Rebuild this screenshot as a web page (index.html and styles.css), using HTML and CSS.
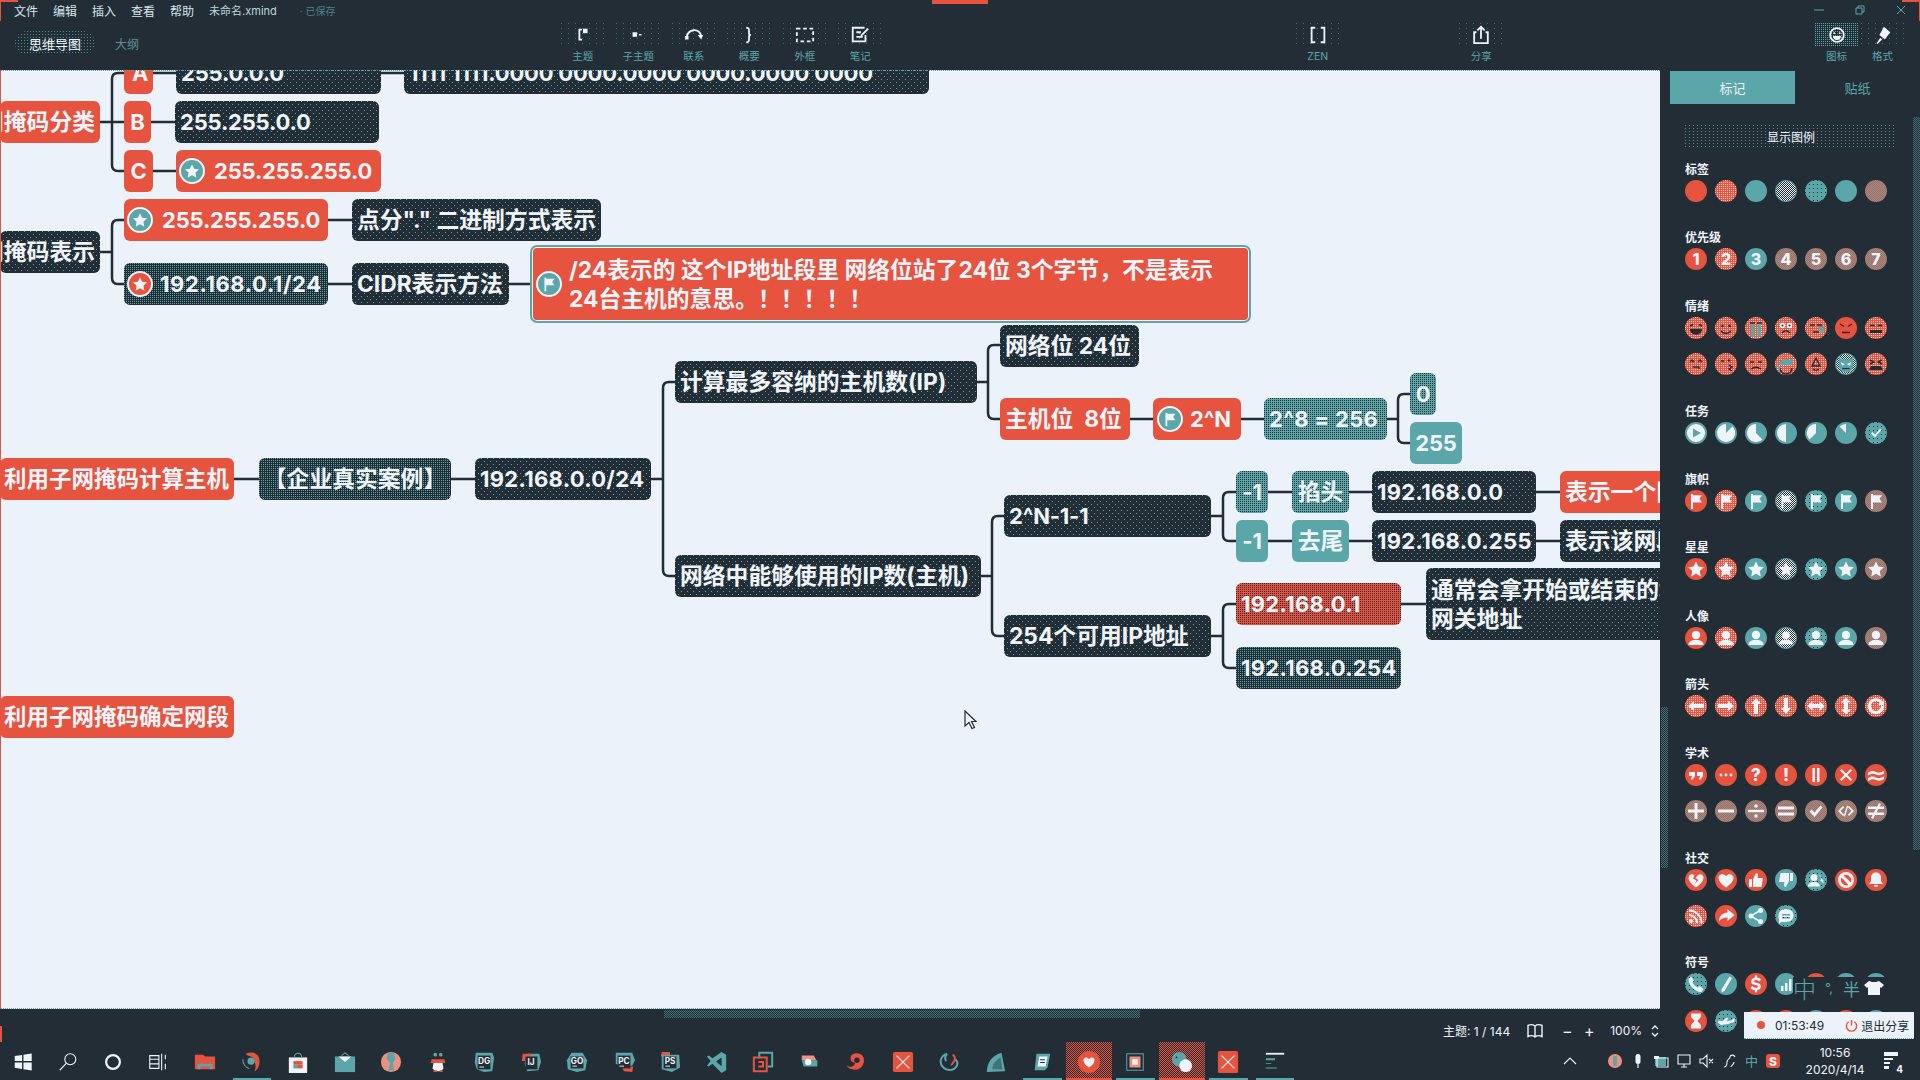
FILE: index.html
```html
<!DOCTYPE html>
<html lang="zh-CN">
<head>
<meta charset="utf-8">
<title>未命名.xmind</title>
<link rel="stylesheet" href="styles.css">
</head>
<body>
<svg class="defs" aria-hidden="true">
  <symbol id="star" viewBox="0 0 22 22"><path d="M11 3.500l2.400 5 5.400.7-4 3.800 1 5.400-4.800-2.700-4.800 2.700 1-5.400-4-3.800 5.400-.7z"/></symbol>
  <symbol id="flag" viewBox="0 0 22 22"><path d="M6 4h2v1.200h9l-2.500 3.600 2.500 3.600H8V19H6z"/></symbol>
  <symbol id="user" viewBox="0 0 22 22"><circle cx="11" cy="8" r="4.200"/><path d="M3.500 18c0-3.500 3-4.500 5-5h5c2 .5 5 1.500 5 5z"/></symbol>
  <symbol id="al" viewBox="0 0 22 22"><path d="M3 11l6-5v3h10v4H9v3z"/></symbol>
  <symbol id="ar" viewBox="0 0 22 22"><path d="M19 11l-6-5v3H3v4h10v3z"/></symbol>
  <symbol id="au" viewBox="0 0 22 22"><path d="M11 3l5 6h-3v10H9V9H6z"/></symbol>
  <symbol id="ad" viewBox="0 0 22 22"><path d="M11 19l5-6h-3V3H9v10H6z"/></symbol>
  <symbol id="ah" viewBox="0 0 22 22"><path d="M2.500 11l5-5v3h7V6l5 5-5 5v-3h-7v3z"/></symbol>
  <symbol id="av" viewBox="0 0 22 22"><path d="M11 2.500l5 5h-3v7h3l-5 5-5-5h3v-7H6z"/></symbol>
  <symbol id="ac" viewBox="0 0 22 22"><path d="M17.500 6.500A8 8 0 1 0 19 11h-3a5 5 0 1 1-1-3l-2 2h6V4z"/></symbol>
  <symbol id="quote" viewBox="0 0 22 22"><path d="M4 8h6v4l-3 4-1-1 1-3H4zM12 8h6v4l-3 4-1-1 1-3h-3z"/></symbol>
  <symbol id="more" viewBox="0 0 22 22"><circle cx="6" cy="11" r="1.400"/><circle cx="11" cy="11" r="1.400"/><circle cx="16" cy="11" r="1.400"/></symbol>
  <symbol id="pause" viewBox="0 0 22 22"><path d="M7.500 4h2.500v14H7.500zM12 4h2.500v14H12z"/></symbol>
  <symbol id="times" viewBox="0 0 22 22"><path d="M6.500 5l4.500 4.500L15.500 5 17 6.500 12.500 11l4.500 4.500-1.500 1.500-4.500-4.500L6.500 17 5 15.500 9.500 11 5 6.500z"/></symbol>
  <symbol id="approx" viewBox="0 0 22 22"><path d="M3 9c3-3 6-2 8-1s4 1 8-1v2.500c-3 2-6 2-8 1s-4-1.500-8 1zM3 14.500c3-3 6-2 8-1s4 1 8-1V15c-3 2-6 2-8 1s-4-1.500-8 1z"/></symbol>
  <symbol id="plus" viewBox="0 0 22 22"><path d="M9.500 3h3v6.500H19v3h-6.500V19h-3v-6.500H3v-3h6.500z"/></symbol>
  <symbol id="minus" viewBox="0 0 22 22"><path d="M3 9.500h16v3H3z"/></symbol>
  <symbol id="div" viewBox="0 0 22 22"><path d="M3 9.800h16v2.400H3z"/><circle cx="11" cy="6" r="1.800"/><circle cx="11" cy="16" r="1.800"/></symbol>
  <symbol id="eq" viewBox="0 0 22 22"><path d="M3 6.500h16v3H3zM3 12.500h16v3H3z"/></symbol>
  <symbol id="check" viewBox="0 0 22 22"><path d="M4.500 11.500l2-2 3 3 6-7 2 2-8 9.500z"/></symbol>
  <symbol id="code" viewBox="0 0 22 22"><path d="M8 6l1.200 1.200L5.500 11l3.700 3.800L8 16l-5-5zM14 6l5 5-5 5-1.200-1.200 3.700-3.800-3.700-3.800zM12 5.500l1.300.4-3.300 10.600-1.300-.4z"/></symbol>
  <symbol id="neq" viewBox="0 0 22 22"><path d="M3 6.500h16v2.600H3zM3 12.500h16v2.600H3zM14 3l2 1-8 15-2-1z"/></symbol>
  <symbol id="bheart" viewBox="0 0 22 22"><path d="M11 18.500C6 15 3.500 12 3.500 8.800 3.500 6 6.500 4 9.500 6.200L8 9.500l3.500 2-1.500 3 3.500-3.500-3-2L13 6c3-1.800 5.500 0 5.500 2.800 0 3.200-2.500 6.200-7.500 9.700z"/></symbol>
  <symbol id="heart" viewBox="0 0 22 22"><path d="M11 18.500C6 15 3.500 12 3.500 8.800 3.500 5.500 8 3.800 11 7c3-3.200 7.500-1.500 7.500 1.800 0 3.200-2.500 6.200-7.500 9.700z"/></symbol>
  <symbol id="thumbu" viewBox="0 0 22 22"><path d="M4 10h3v8H4zM8 10l3-6c1.500 0 2.500 1 2 3l-.5 2H18l-1.500 9H8z"/></symbol>
  <symbol id="thumbd" viewBox="0 0 22 22"><path d="M18 12h-3V4h3zM14 12l-3 6c-1.500 0-2.500-1-2-3l.5-2H4l1.500-9H14z"/></symbol>
  <symbol id="group" viewBox="0 0 22 22"><circle cx="9" cy="8.500" r="3.500"/><path d="M3 17.500c0-3 3-4 4-4.500h4c1 .5 4 1.500 4 4.500z"/><path d="M13.500 5.500a3.500 3.500 0 0 1 1.500 6l3.500 3v-3z" opacity=".9"/></symbol>
  <symbol id="ban" viewBox="0 0 22 22"><path fill-rule="evenodd" d="M11 3a8 8 0 1 1 0 16 8 8 0 0 1 0-16zM6.500 8.500a5.500 5.500 0 0 0 7 7.500zM8.500 6.500l7.500 7a5.500 5.500 0 0 0-7.500-7z"/></symbol>
  <symbol id="bell" viewBox="0 0 22 22"><path d="M11 3.500c3 0 5 2 5 5v3.500l2 3H4l2-3V8.500c0-3 2-5 5-5zM9 16h4a2 2 0 0 1-4 0z"/></symbol>
  <symbol id="rss" viewBox="0 0 22 22"><circle cx="6" cy="16" r="2"/><path d="M4 9a9 9 0 0 1 9 9h-2a7 7 0 0 0-7-7zM4 4.500A13.500 13.500 0 0 1 17.500 18h-2A11.500 11.500 0 0 0 4 6.500z"/></symbol>
  <symbol id="fwd" viewBox="0 0 22 22"><path d="M12.500 4l7 6-7 6v-3.500c-4 0-6.500 1-8.500 4 0-5 3-8.500 8.500-9z"/></symbol>
  <symbol id="share" viewBox="0 0 22 22"><circle cx="15.500" cy="5.500" r="2.500"/><circle cx="6" cy="11" r="2.500"/><circle cx="15.500" cy="16.500" r="2.500"/><path d="M6 10l9-5.500.8 1.500L7.500 11l8.300 5-.8 1.500L6 12z"/></symbol>
  <symbol id="chat" viewBox="0 0 22 22"><path fill-rule="evenodd" d="M11 4c4.500 0 7.500 2.800 7.500 6.500S15.500 17 11 17H6l-2 2v-5c-.5-1-.5-2.500-.5-3.500C3.500 6.800 6.500 4 11 4zM7 9v1.500h8V9zM7 12v1.500h8V12z"/></symbol>
  <symbol id="phone" viewBox="0 0 22 22"><path d="M6 3.500l3 4-1.500 2c1 2 2.500 3.500 5 5l2-1.500 4 3-2 3c-6 .5-13-6.500-13-13z"/></symbol>
  <symbol id="pen" viewBox="0 0 22 22"><path d="M14.500 3.500l2.500 1.500-7.500 13-3 1.500.2-3.300z"/></symbol>
  <symbol id="dollar" viewBox="0 0 22 22"><path d="M10 2.500h2v2c2 .2 3.500 1 4 2l-1.500 2c-1-1-3.500-2-5-1-.8 1-.2 1.700 1 2l2 .5c2 .6 3.500 1.500 3.500 3.500s-1.500 3.300-4 3.700v2h-2v-2c-2-.2-3.500-1-4.500-2.200l1.600-2c1 1.200 4 2.400 5.500 1.200.8-1 .2-1.700-1-2l-2-.5C7.700 11.600 6.200 10.700 6.200 8.700s1.500-3.700 3.800-4.100z"/></symbol>
  <symbol id="bars" viewBox="0 0 22 22"><path d="M6 13h2.500v5H6zM10 10h2.500v8H10zM14 6h2.500v12H14z"/></symbol>
  <symbol id="hour" viewBox="0 0 22 22"><path d="M6 3.500h10v2c0 3-3 4-3.500 5.500.5 1.500 3.500 2.500 3.500 5.500v2H6v-2c0-3 3-4 3.500-5.500C9 9.500 6 8.500 6 5.500z"/></symbol>
  <symbol id="plane" viewBox="0 0 22 22"><path d="M2.500 12.500l1-2 4 .8L11 8h2.500L11.500 11l5-.5 2-2h1.500l-1 3.500-6 2-7 1z"/></symbol>
  <symbol id="play" viewBox="0 0 22 22"><path fill-rule="evenodd" d="M11 2a9 9 0 1 1 0 18 9 9 0 0 1 0-18zM8 6.500v9l8-4.500z"/></symbol>
  <symbol id="p7" viewBox="0 0 22 22"><path d="M11 11L17.400 4.600A9 9 0 1 1 11 2Z"/></symbol>
  <symbol id="p5" viewBox="0 0 22 22"><path d="M11 11L17.400 17.400A9 9 0 1 1 11 2Z"/></symbol>
  <symbol id="p4" viewBox="0 0 22 22"><path d="M11 11V20A9 9 0 0 1 11 2Z"/></symbol>
  <symbol id="p3" viewBox="0 0 22 22"><path d="M11 11L4.600 17.400A9 9 0 0 1 11 2Z"/></symbol>
  <symbol id="p1" viewBox="0 0 22 22"><path d="M11 11L4.600 4.600A9 9 0 0 1 11 2Z"/></symbol>
  <symbol id="tick" viewBox="0 0 22 22"><path d="M6 11.500l1.400-1.400 2.600 2.600 5-6 1.400 1.200-6.400 7.600z"/></symbol>
  <symbol id="f1" viewBox="0 0 22 22"><path class="fs" d="M5 9l3-1.500M17 9l-3-1.500"/><path class="ff" d="M5 12h12c0 4-2.500 5.500-6 5.500S5 16 5 12z"/></symbol>
  <symbol id="f2" viewBox="0 0 22 22"><circle class="ff" cx="7.500" cy="9" r="1.300"/><circle class="ff" cx="14.500" cy="9" r="1.300"/><path class="fs" d="M6 14c2 3 8 3 10 0"/></symbol>
  <symbol id="f3" viewBox="0 0 22 22"><path class="fs" d="M5 6h5M12 6h5"/><path class="ft" d="M6 7h3.500v13H6zM12.500 7H16v13h-3.500z"/></symbol>
  <symbol id="f4" viewBox="0 0 22 22"><circle class="fw" cx="7.500" cy="8.500" r="2.700"/><circle class="fw" cx="14.500" cy="8.500" r="2.700"/><circle class="ff" cx="7.500" cy="8.500" r="1"/><circle class="ff" cx="14.500" cy="8.500" r="1"/><path class="fs" d="M7 16c2-3 6-3 8 0"/></symbol>
  <symbol id="f5" viewBox="0 0 22 22"><path class="fs" d="M5 8h5M12 8h5M8 15h6"/><path class="ft" d="M14 10h6l-2 6-3 .5z"/></symbol>
  <symbol id="f6" viewBox="0 0 22 22"><path class="fs" d="M5 7l4 2.500M17 7l-4 2.500M7 15.500h8"/></symbol>
  <symbol id="f7" viewBox="0 0 22 22"><path class="fs" d="M5 8.500h4.500M12.500 8.500H17"/><path class="ff" d="M5 13h12v3H5z"/></symbol>
  <symbol id="f8" viewBox="0 0 22 22"><path class="fs" d="M5 9l2-2 2 2M13 9l2-2 2 2M8 14h6v2"/></symbol>
  <symbol id="f9" viewBox="0 0 22 22"><circle class="ff" cx="14" cy="7.500" r="1.200"/><path class="fs" d="M6 8h3M14 12l3 2-3 2 3 2"/></symbol>
  <symbol id="f10" viewBox="0 0 22 22"><path class="fs" d="M5 9h4M13 9h4M6 16c3-2 7-2 10 0"/></symbol>
  <symbol id="f11" viewBox="0 0 22 22"><path class="fs" d="M5 15a6 6 0 0 0 12 0"/><path class="ft" d="M4 12a7 7 0 0 1 11-5l3-2v6l-3 1zM3 13h2v6H3z"/></symbol>
  <symbol id="f12" viewBox="0 0 22 22"><path class="fs" d="M11 5l-4 8h8zM8 16c2 1.500 4 1.500 6 0"/></symbol>
  <symbol id="f13" viewBox="0 0 22 22"><path class="ft" d="M3 2l4 4h8l4-4v10c0 5-3 8-8 8s-8-3-8-8z"/><path class="fw" d="M5 9l5 2-3 2zM17 9l-5 2 3 2z"/><path class="fs" d="M7 16h8"/></symbol>
  <symbol id="f14" viewBox="0 0 22 22"><path class="fs" d="M5 7l4 2-4 2M17 7l-4 2 4 2"/><path class="ff" d="M6 13h10l2 4H4z"/></symbol>
</svg>

<div class="app">
  <header class="top">
    <nav class="menu">
      <span>文件</span><span>编辑</span><span>插入</span><span>查看</span><span>帮助</span>
      <span class="fname">未命名.xmind</span><span class="saved">· 已保存</span>
      <div class="winbtns">
        <svg viewBox="0 0 12 12"><path d="M1 6h10"/></svg>
        <svg viewBox="0 0 12 12"><path d="M2 4h6v6H2zM4 4V2h6v6H8"/></svg>
        <svg viewBox="0 0 12 12"><path d="M2 2l8 8M10 2l-8 8"/></svg>
      </div>
    </nav>
    <div class="tools">
      <div class="modes"><span class="pill">思维导图</span><span class="outline-tab">大纲</span></div>
      <div class="toolgroup">
        <div class="tool"><span class="tico"><svg viewBox="0 0 22 22"><path class="ts" d="M10 5H7v11h3"/><path class="tf" d="M11 4h5v5h-5z"/></svg></span><span class="tlab">主题</span></div>
        <div class="tool"><span class="tico"><svg viewBox="0 0 22 22"><path class="tf" d="M5 8h5v5H5z"/><path class="tf" d="M12 10h3v1.500h-3z"/></svg></span><span class="tlab">子主题</span></div>
        <div class="tool"><span class="tico"><svg viewBox="0 0 22 22"><path class="ts" d="M3 13c2-9 13-10 16-1"/><path class="tf" d="M1 12h4v4H1zM15 11l6 0-2 5z"/></svg></span><span class="tlab">联系</span></div>
        <div class="tool"><span class="tico"><svg viewBox="0 0 22 22"><path class="ts" d="M8 3c3 0 3 1 3 3v3c0 1 1 2 2 2-1 0-2 1-2 2v3c0 2 0 3-3 3"/></svg></span><span class="tlab">概要</span></div>
        <div class="tool"><span class="tico"><svg viewBox="0 0 22 22"><path class="ts dash" d="M2 4h18v14H2z"/></svg></span><span class="tlab">外框</span></div>
        <div class="tool"><span class="tico"><svg viewBox="0 0 22 22"><path class="ts" d="M16 3H3v15h14v-7M7 8h5M7 13h7M12 12l8-8"/></svg></span><span class="tlab">笔记</span></div>
      </div>
      <div class="tool zen"><span class="tico"><svg viewBox="0 0 22 22"><path class="ts" d="M8 3H4v16h4M14 3h4v16h-4"/></svg></span><span class="tlab">ZEN</span></div>
      <div class="tool shr"><span class="tico"><svg viewBox="0 0 22 22"><path class="ts" d="M6 8H3.500v12h15V8H16M11 15V2M7 6l4-4 4 4"/></svg></span><span class="tlab">分享</span></div>
      <div class="rtools">
        <div class="tool rt on"><span class="tico"><svg viewBox="0 0 22 22"><circle class="ts" cx="11" cy="11" r="7.500"/><circle class="tf" cx="8" cy="9" r="1"/><circle class="tf" cx="14" cy="9" r="1"/><path class="tf" d="M6.500 12h9c0 3-2 4.500-4.500 4.500S6.500 15 6.500 12z"/></svg></span><span class="tlab">图标</span></div>
        <div class="tool rt"><span class="tico"><svg viewBox="0 0 22 22"><path class="tf" d="M12 2l7 6-6 8-6-5zM8 14l2 2-5 5-1-1z"/></svg></span><span class="tlab">格式</span></div>
      </div>
    </div>
  </header>

  <div class="middle">
    <div class="leftcol">
      <main class="canvas">
        <svg class="links" viewBox="0 70 1660 939">
          <path d="M100 122H124M124 73H118q-6 0-6 6V165q0 6 6 6H124M152 73H176M380 73H404M150 122H175M152 171H176"/>
          <path d="M100 252H112M124 220H118q-6 0-6 6V278q0 6 6 6H124M327 220H352M327 284H352M508 284H532"/>
          <path d="M234 479H259M450 479H475M650 479H663M675 382H669q-6 0-6 6V570q0 6 6 6H675"/>
          <path d="M976 382H988M1000 345H994q-6 0-6 6V413q0 6 6 6H1000M1129 419H1153M1240 419H1264M1386 419H1398M1410 394H1404q-6 0-6 6V437q0 6 6 6H1410"/>
          <path d="M980 576H992M1004 516H998q-6 0-6 6V630q0 6 6 6H1004M1211 516H1223M1236 492H1229q-6 0-6 6V535q0 6 6 6H1236"/>
          <path d="M1267 492H1292M1348 492H1372M1535 492H1560M1267 541H1292M1348 541H1372M1535 541H1560"/>
          <path d="M1211 636H1223M1236 604H1229q-6 0-6 6V662q0 6 6 6H1236M1400 604H1426"/>
        </svg>

        <div class="n red a1">A</div>
        <div class="n dark sp a2">255.0.0.0</div>
        <div class="n dark sp a3">1111 1111.0000 0000.0000 0000.0000 0000</div>
        <div class="n red cj a4 rt-text">网掩码分类</div>
        <div class="n red a5 ctr">B</div>
        <div class="n dark sp a6">255.255.0.0</div>
        <div class="n red a7 ctr">C</div>
        <div class="n red a8"><span class="badge b-teal"><svg><use href="#star"/></svg></span>255.255.255.0</div>
        <div class="n dark sp cj a9 rt-text">网掩码表示</div>
        <div class="n red a10"><span class="badge b-teal"><svg><use href="#star"/></svg></span>255.255.255.0</div>
        <div class="n dark sp cj a11">点分"." 二进制方式表示</div>
        <div class="n dark dn ip2 a12"><span class="badge b-red"><svg><use href="#star"/></svg></span>192.168.0.1/24</div>
        <div class="n dark sp cj a13">CIDR表示方法</div>
        <div class="n red a14 big"><span class="badge b-teal"><svg><use href="#flag"/></svg></span><span class="multi">/24表示的 这个IP地址段里 网络位站了24位 3个字节，不是表示<br>24台主机的意思。！！！！！</span></div>

        <div class="n red cj b1 rt-text">利用子网掩码计算主机</div>
        <div class="n dark dn cj b2 ctr">【企业真实案例】</div>
        <div class="n dark sp ip b3">192.168.0.0/24</div>
        <div class="n dark sp cj b4">计算最多容纳的主机数(IP)</div>
        <div class="n dark sp cj b5">网络中能够使用的IP数(主机)</div>
        <div class="n dark sp cj b6">网络位 24位</div>
        <div class="n red cj b7">主机位&nbsp;&nbsp;8位</div>
        <div class="n red b8"><span class="badge b-teal"><svg><use href="#flag"/></svg></span>2^N</div>
        <div class="n teal td ip b9">2^8 = 256</div>
        <div class="n teal td b10 ctr">0</div>
        <div class="n teal b11 ctr">255</div>
        <div class="n dark sp b12">2^N-1-1</div>
        <div class="n teal td b13 ctr">-1</div>
        <div class="n teal td cj b14 ctr">掐头</div>
        <div class="n dark sp ip b15">192.168.0.0</div>
        <div class="n red cj b16">表示一个网段</div>
        <div class="n teal b17 ctr">-1</div>
        <div class="n teal cj b18 ctr">去尾</div>
        <div class="n dark sp ip b19">192.168.0.255</div>
        <div class="n dark sp cj b20">表示该网段的广播地址</div>
        <div class="n dark sp cj b21">254个可用IP地址</div>
        <div class="n red rd ip b22">192.168.0.1</div>
        <div class="n dark dn ip b23">192.168.0.254</div>
        <div class="n dark sp big b24"><span class="multi">通常会拿开始或结束的地址作为<br>网关地址</span></div>
        <div class="n red cj b25 rt-text">利用子网掩码确定网段</div>

        <svg class="cursor" viewBox="0 0 14 20"><path d="M1 1v15l4-3.500 3 6 2.500-1-3-6H12z"/></svg>
      </main>
      <footer class="status">
        <span class="thumb"></span>
        <span class="count">主题: 1 / 144</span>
        <svg class="st-ic book" viewBox="0 0 18 16"><path d="M9 3C7 1.500 4 1.500 2 2.500v11c2-1 5-1 7 .5 2-1.500 5-1.500 7-.5v-11C14 1.500 11 1.500 9 3zM9 3v11"/></svg>
        <span class="zoombtn">−</span><span class="zoombtn">+</span>
        <span class="pct">100%</span>
        <svg class="st-ic updn" viewBox="0 0 10 16"><path d="M2 6l3-3 3 3M2 10l3 3 3-3"/></svg>
      </footer>
    </div>

    <aside class="side">
      <div class="tabs"><span class="tab on">标记</span><span class="tab">贴纸</span></div>
      <div class="legend">显示图例</div>

      <section class="sec"><h3>标签</h3><div class="grid">
        <span class="mk m-r"></span><span class="mk m-rd"></span><span class="mk m-t"></span><span class="mk m-x"></span><span class="mk m-td"></span><span class="mk m-t"></span><span class="mk m-c"></span>
      </div></section>

      <section class="sec"><h3>优先级</h3><div class="grid num">
        <span class="mk m-r">1</span><span class="mk m-rd">2</span><span class="mk m-t">3</span><span class="mk m-c">4</span><span class="mk m-c">5</span><span class="mk m-c">6</span><span class="mk m-c">7</span>
      </div></section>

      <section class="sec"><h3>情绪</h3><div class="grid">
        <span class="mk m-rd"><svg><use href="#f1"/></svg></span><span class="mk m-rd"><svg><use href="#f2"/></svg></span><span class="mk m-rd"><svg><use href="#f3"/></svg></span><span class="mk m-rd"><svg><use href="#f4"/></svg></span><span class="mk m-rd"><svg><use href="#f5"/></svg></span><span class="mk m-r"><svg><use href="#f6"/></svg></span><span class="mk m-rd"><svg><use href="#f7"/></svg></span>
        <span class="mk m-rd"><svg><use href="#f8"/></svg></span><span class="mk m-rd"><svg><use href="#f9"/></svg></span><span class="mk m-rd"><svg><use href="#f10"/></svg></span><span class="mk m-rd"><svg><use href="#f11"/></svg></span><span class="mk m-rd"><svg><use href="#f12"/></svg></span><span class="mk m-x"><svg><use href="#f13"/></svg></span><span class="mk m-rd"><svg><use href="#f14"/></svg></span>
      </div></section>

      <section class="sec"><h3>任务</h3><div class="grid">
        <span class="mk m-t"><svg><use href="#play"/></svg></span><span class="mk m-t"><svg><use href="#p7"/></svg></span><span class="mk m-t"><svg><use href="#p5"/></svg></span><span class="mk m-t"><svg><use href="#p4"/></svg></span><span class="mk m-t"><svg><use href="#p3"/></svg></span><span class="mk m-t"><svg><use href="#p1"/></svg></span><span class="mk m-td"><svg><use href="#tick"/></svg></span>
      </div></section>

      <section class="sec"><h3>旗帜</h3><div class="grid">
        <span class="mk m-r"><svg><use href="#flag"/></svg></span><span class="mk m-rd"><svg><use href="#flag"/></svg></span><span class="mk m-t"><svg><use href="#flag"/></svg></span><span class="mk m-x"><svg><use href="#flag"/></svg></span><span class="mk m-td"><svg><use href="#flag"/></svg></span><span class="mk m-t"><svg><use href="#flag"/></svg></span><span class="mk m-c"><svg><use href="#flag"/></svg></span>
      </div></section>

      <section class="sec"><h3>星星</h3><div class="grid">
        <span class="mk m-r"><svg><use href="#star"/></svg></span><span class="mk m-rd"><svg><use href="#star"/></svg></span><span class="mk m-t"><svg><use href="#star"/></svg></span><span class="mk m-x"><svg><use href="#star"/></svg></span><span class="mk m-td"><svg><use href="#star"/></svg></span><span class="mk m-t"><svg><use href="#star"/></svg></span><span class="mk m-c"><svg><use href="#star"/></svg></span>
      </div></section>

      <section class="sec"><h3>人像</h3><div class="grid">
        <span class="mk m-r"><svg><use href="#user"/></svg></span><span class="mk m-rd"><svg><use href="#user"/></svg></span><span class="mk m-t"><svg><use href="#user"/></svg></span><span class="mk m-x"><svg><use href="#user"/></svg></span><span class="mk m-td"><svg><use href="#user"/></svg></span><span class="mk m-t"><svg><use href="#user"/></svg></span><span class="mk m-c"><svg><use href="#user"/></svg></span>
      </div></section>

      <section class="sec"><h3>箭头</h3><div class="grid">
        <span class="mk m-rd"><svg><use href="#al"/></svg></span><span class="mk m-rd"><svg><use href="#ar"/></svg></span><span class="mk m-rd"><svg><use href="#au"/></svg></span><span class="mk m-rd"><svg><use href="#ad"/></svg></span><span class="mk m-rd"><svg><use href="#ah"/></svg></span><span class="mk m-rd"><svg><use href="#av"/></svg></span><span class="mk m-rd"><svg><use href="#ac"/></svg></span>
      </div></section>

      <section class="sec"><h3>学术</h3><div class="grid">
        <span class="mk m-r"><svg><use href="#quote"/></svg></span><span class="mk m-r"><svg><use href="#more"/></svg></span><span class="mk m-r glyph">?</span><span class="mk m-r glyph">!</span><span class="mk m-r"><svg><use href="#pause"/></svg></span><span class="mk m-r"><svg><use href="#times"/></svg></span><span class="mk m-r"><svg><use href="#approx"/></svg></span>
        <span class="mk m-c"><svg><use href="#plus"/></svg></span><span class="mk m-c"><svg><use href="#minus"/></svg></span><span class="mk m-c"><svg><use href="#div"/></svg></span><span class="mk m-c"><svg><use href="#eq"/></svg></span><span class="mk m-c"><svg><use href="#check"/></svg></span><span class="mk m-c"><svg><use href="#code"/></svg></span><span class="mk m-c"><svg><use href="#neq"/></svg></span>
      </div></section>

      <section class="sec"><h3>社交</h3><div class="grid">
        <span class="mk m-r"><svg><use href="#bheart"/></svg></span><span class="mk m-r"><svg><use href="#heart"/></svg></span><span class="mk m-r"><svg><use href="#thumbu"/></svg></span><span class="mk m-t"><svg><use href="#thumbd"/></svg></span><span class="mk m-td"><svg><use href="#group"/></svg></span><span class="mk m-r"><svg><use href="#ban"/></svg></span><span class="mk m-r"><svg><use href="#bell"/></svg></span>
        <span class="mk m-rd"><svg><use href="#rss"/></svg></span><span class="mk m-r"><svg><use href="#fwd"/></svg></span><span class="mk m-t"><svg><use href="#share"/></svg></span><span class="mk m-td"><svg><use href="#chat"/></svg></span>
      </div></section>

      <section class="sec"><h3>符号</h3><div class="grid">
        <span class="mk m-td"><svg><use href="#phone"/></svg></span><span class="mk m-t"><svg><use href="#pen"/></svg></span><span class="mk m-r"><svg><use href="#dollar"/></svg></span><span class="mk m-t"><svg><use href="#bars"/></svg></span><span class="mk m-r"></span><span class="mk m-t"></span><span class="mk m-t"></span>
        <span class="mk m-r"><svg><use href="#hour"/></svg></span><span class="mk m-td"><svg><use href="#plane"/></svg></span><span class="mk m-r"></span><span class="mk m-r"></span><span class="mk m-t"></span><span class="mk m-r"></span><span class="mk m-t"></span>
      </div></section>

      <i class="scroll-r"></i>
    </aside>
  </div>

  <footer class="taskbar">
    <div class="tb g1">
      <span class="ti"><svg viewBox="0 0 24 24"><path class="w" d="M3 5.500l8-1.200V11H3zM12.500 4l9-1.300V11h-9zM3 12.500h8v7l-8-1.200zM12.500 12.500h9v8.800l-9-1.300z"/></svg></span>
      <span class="ti"><svg viewBox="0 0 24 24"><circle class="ws" cx="14.500" cy="9" r="6"/><path class="ws" d="M10 13.500L3 21"/></svg></span>
      <span class="ti"><svg viewBox="0 0 24 24"><circle class="ws th" cx="12" cy="12" r="7.500"/></svg></span>
      <span class="ti"><svg viewBox="0 0 24 24"><path class="ws" d="M3 5h10v4H3zM3 9v5h10V9M3 14v5h10v-5M16 3v18M20 4v5M20 14v6"/></svg></span>
    </div>
    <div class="tb g2">
      <span class="ti"><svg viewBox="0 0 24 24"><path class="r" d="M1 4h9l2 2h11v14H1z"/><path class="t" d="M4 20v-6h16v6h-3v-3H7v3z"/></svg></span>
      <span class="ti act"><svg viewBox="0 0 24 24"><path class="r" d="M5 3c6-3 14-1 15 6 1 6-1 11-5 13l1-5-2-9c-3-3-7-2-9-5z"/><circle class="t" cx="11" cy="11" r="4"/><path class="ws tl" d="M2 9c0 5 3 9 7 10"/></svg></span>
      <span class="ti"><svg viewBox="0 0 24 24"><path class="w" d="M2 7h20v17H2z"/><path class="ws dk" d="M8 7c0-6 8-6 8 0"/><path class="r" d="M7 11h10v4H7z"/><path class="t" d="M7 15h5v4H7z"/><path class="r" d="M12 15h5v4h-5z"/></svg></span>
      <span class="ti"><svg viewBox="0 0 24 24"><path class="t" d="M1 6h22v17H1z"/><path class="w" d="M5 6h14l-7 6z"/><path class="ws tl" d="M8 5l4-3 4 3"/></svg></span>
      <span class="ti"><svg viewBox="0 0 24 24"><circle class="rd-f" cx="12" cy="12" r="11"/><path class="t" d="M9 2h6l2 6-3 5 1 8H9l2-8-4-5z"/></svg></span>
      <span class="ti"><svg viewBox="0 0 24 24"><circle class="t" cx="9" cy="4" r="2"/><circle class="t" cx="15" cy="4" r="2"/><path class="r" d="M5 9h14l1 4H4z"/><path class="w" d="M7 13h10l1 6-3 3H9l-3-3z"/><path class="r" d="M7 21h4v2H7zM14 21h3v2h-3z"/></svg></span>
      <span class="ti jb j-dg"><svg viewBox="0 0 24 24"><path class="t" d="M3 2h18l2 5-2 15-9 1-8-3-2-8z"/><path class="d" d="M5 5h14v15H5z"/><text x="12" y="14" class="jt">DG</text><path class="w" d="M7 17h5v1H7z"/></svg></span>
      <span class="ti jb"><svg viewBox="0 0 24 24"><path class="t" d="M8 3h13l2 9-3 9-12 1-3-8z"/><path class="r" d="M3 3h9v8H2z"/><path class="d" d="M6 6h13v14H6z"/><text x="12" y="15" class="jt">IJ</text></svg></span>
      <span class="ti jb"><svg viewBox="0 0 24 24"><path class="t" d="M6 2h12l5 8-2 11-9 2-10-3-1-10z"/><path class="d" d="M5 6h14v13H5z"/><text x="12" y="14" class="jt">GO</text><path class="w" d="M7 16h5v1H7z"/></svg></span>
      <span class="ti jb"><svg viewBox="0 0 24 24"><path class="t" d="M3 2h18l3 8-3 6H8l-5-2z"/><path class="r" d="M9 17h13l-1 6-9-1z"/><path class="d" d="M5 5h14v14H5z"/><text x="12" y="14" class="jt">PC</text><path class="w" d="M7 16h5v1H7z"/></svg></span>
      <span class="ti jb"><svg viewBox="0 0 24 24"><path class="r" d="M3 1h9v5H2z"/><path class="t" d="M3 4h19l1 14-9 5-11-3z"/><path class="d" d="M5 6h14v13H5z"/><text x="12" y="14" class="jt">PS</text><path class="w" d="M7 16h5v1H7z"/></svg></span>
      <span class="ti"><svg viewBox="0 0 24 24"><path class="t" d="M17 1l5 3v17l-5 3L7 14l-4 3-2-1 4-5-4-5 2-1 4 3zM17 7l-6 4.500 6 5z"/></svg></span>
      <span class="ti"><svg viewBox="0 0 24 24"><path class="ts-t" d="M8 8V2h14v15h-5"/><path class="ts-r" d="M16 7H2v15h14zM7 12h5v5H7"/></svg></span>
      <span class="ti"><svg viewBox="0 0 24 24"><path class="rd-f" d="M3 5h13l3 5h-16z"/><path class="t" d="M3 10h17v7H5z"/><circle class="w" cx="10" cy="12" r="3.500"/><path class="t" d="M10 9v6"/></svg></span>
      <span class="ti"><svg viewBox="0 0 24 24"><path class="r" d="M1 15c5 4 9 2 10-2-4-1-5-3-5-6 1-5 9-6 13-2 3 4 2 11-3 14-6 3-12 1-15-4z"/><circle class="d" cx="13" cy="10" r="3"/></svg></span>
      <span class="ti"><svg viewBox="0 0 24 24"><rect class="r" x="1" y="1" width="22" height="22" rx="2"/><path class="ws" d="M5 5l14 14M19 5L5 19"/></svg></span>
      <span class="ti"><svg viewBox="0 0 24 24"><path class="ts-t" d="M10 3C3 5 1 12 5 17s12 5 15 0c2-3 1-6-1-8M10 3c-2 2-3 5-1 8"/><path class="ts-r" d="M16 4c3 2 3 5 1 8-1 2-2 3-3 3"/></svg></span>
      <span class="ti"><svg viewBox="0 0 24 24"><path class="t" d="M2 23c0-9 5-18 16-21l4 20z"/><path class="dot-d" d="M8 20c0-5 3-10 9-13l2 13z"/></svg></span>
      <span class="ti act"><svg viewBox="0 0 24 24"><path class="t" d="M6 3h15l-3 15-3 3H4z"/><path class="w" d="M9 6h9l-2 11H7z"/><path class="d" d="M10 9h5v1h-5zM10 12h5v1h-5z"/></svg></span>
      <span class="ti hot"><svg viewBox="0 0 24 24"><circle class="r" cx="12" cy="12" r="12"/><path class="w" d="M12 18c-4-3-6-5-6-8 0-3 4-4 6-1 2-3 6-2 6 1 0 3-2 5-6 8z"/></svg></span>
      <span class="ti act"><svg viewBox="0 0 24 24"><rect class="ws tl thin" x="3" y="3" width="18" height="18"/><rect class="rd-f" x="6" y="6" width="12" height="12"/><path class="w" d="M9 9h6v6H9z"/></svg></span>
      <span class="ti hot"><svg viewBox="0 0 24 24"><ellipse class="t" cx="9" cy="9" rx="8" ry="8"/><circle class="w" cx="16" cy="16" r="7"/><circle class="d" cx="6" cy="7" r="1"/></svg></span>
      <span class="ti act"><svg viewBox="0 0 24 24"><rect class="r" x="1" y="0" width="22" height="24" rx="2"/><path class="ws" d="M5 5l14 14M19 5L5 19"/></svg></span>
      <span class="ti act"><svg viewBox="0 0 24 24"><path class="w" d="M2 2h20v2H2z"/><path class="t" d="M2 8h10v2H2zM2 13h6v1H2zM2 18h12v1H2z"/></svg></span>
    </div>
    <div class="tray">
      <svg class="ty up" viewBox="0 0 16 16"><path class="ws" d="M2 11l6-6 6 6"/></svg>
      <svg class="ty" viewBox="0 0 16 16"><circle class="rd-f" cx="8" cy="8" r="7"/><path class="t" d="M6 3h4v10H6z"/></svg>
      <svg class="ty" viewBox="0 0 16 16"><rect class="w" x="5.500" y="1" width="5" height="10" rx="2.500"/><path class="ws" d="M8 11v4"/></svg>
      <svg class="ty" viewBox="0 0 16 16"><path class="t" d="M2 4h11v9H2z"/><path class="w" d="M1 3h5v3H1z"/><path class="ws thin" d="M4 5h11v9H4z"/></svg>
      <svg class="ty" viewBox="0 0 16 16"><path class="ws thin" d="M2 2h12v9H2zM8 11v3M5 14h6"/></svg>
      <svg class="ty" viewBox="0 0 16 16"><path class="ws thin" d="M1 6h3l4-4v12l-4-4H1zM10 6l4 4M14 6l-4 4"/></svg>
      <svg class="ty" viewBox="0 0 16 16"><path class="ws thin" d="M2 14c3 0 3-3 3-5 0-3 3-3 3-5 0-2 4-3 5 0M9 14c0-2 3-2 3-5"/></svg>
      <span class="tray-t">中</span>
      <svg class="ty" viewBox="0 0 16 16"><rect class="r" x="1" y="1" width="14" height="14" rx="3"/><text x="8" y="13" class="st">S</text></svg>
      <div class="clock"><span>10:56</span><span>2020/4/14</span></div>
      <div class="notif"><svg viewBox="0 0 16 20"><path class="w" d="M1 1h14v4H1zM1 7h9v2H1zM1 11h6v2H1zM1 15h5v3H1z"/></svg><b>4</b></div>
    </div>
  </footer>

  <i class="red-top"></i><i class="red-tl"></i><i class="red-tr"></i><i class="red-ll"></i><i class="scroll-l"></i>

  <div class="ime"><span class="ime-zh">中</span><span class="ime-p">°,</span><span class="ime-b">半</span>
    <svg viewBox="0 0 20 16"><path d="M5 1l3 1h4l3-1 5 4-3 3-1-1v8H4V7L3 8 0 5z"/></svg>
  </div>
  <div class="rec">
    <i class="rec-dot"></i><span class="rec-time">01:53:49</span>
    <svg viewBox="0 0 14 14"><path d="M4 3a5.500 5.500 0 1 0 6 0M7 1v6"/></svg><span class="rec-exit">退出分享</span>
  </div>
</div>
</body>
</html>
```

FILE: styles.css
```css
:root {
  --dk: #232d35;
  --rd: #e6533e;
  --tl: #5ba6a8;
  --bg: #ebf2f9;
  --wh: #eef4fa;
}
* { box-sizing: border-box; }
html, body { margin: 0; height: 100%; }
body { background: var(--dk); color: var(--wh); font-family: Inter, "Noto Sans CJK SC", sans-serif; overflow: hidden; }
.defs { position: absolute; width: 0; height: 0; }
.app { position: relative; width: 1920px; height: 1080px; display: grid; grid-template-rows: 70px 972px 38px; }

/* top bar */
.top { display: flex; flex-direction: column; background: var(--dk); }
.menu { height: 20px; display: flex; align-items: center; gap: 15px; padding-left: 14px; font-size: 12px; color: #d5e5ea; }
.menu .fname { font-size: 11px; margin-left: 0; color: #bcd6da; }
.menu .saved { color: #4d8286; font-size: 10px; margin-left: 8px; }
.winbtns { margin-left: auto; display: flex; gap: 29px; margin-right: 13px; }
.winbtns svg { width: 12px; height: 12px; fill: none; stroke: var(--tl); stroke-width: 1; }
.tools { display: flex; flex: 1; align-items: flex-start; }
.modes { width: 555px; display: flex; align-items: center; padding: 11px 0 0 15px; gap: 20px; }
.pill { width: 80px; height: 24px; border-radius: 12px; display: flex; align-items: center; justify-content: center; font-size: 13px; color: var(--wh);
  background: conic-gradient(at 1px 1px, transparent 75%, #4d8b8f 0) 0 0/3px 3px; }
.outline-tab { font-size: 12px; color: #5f8f93; }
.toolgroup { display: flex; }
.tool { width: 55.500px; display: flex; flex-direction: column; align-items: center; gap: 3px; padding-top: 3px; }
.tico { width: 44px; height: 24px; display: flex; align-items: center; justify-content: center;
  background: conic-gradient(at 1px 1px, transparent 75%, #3f7477 0) 0 0/7px 5px; }
.tico svg { width: 20px; height: 20px; }
.ts { fill: none; stroke: var(--wh); stroke-width: 2; }
.ts.dash { stroke-dasharray: 4 3; }
.tf { fill: var(--wh); }
.tlab { font-size: 10.500px; line-height: 13px; color: var(--tl); }
.zen { margin-left: 402px; }
.shr { margin-left: 108px; }
.rtools { display: flex; margin-left: 304.500px; }
.rt { width: 46px; }
.rt.on .tico { background: conic-gradient(at 1px 1px, transparent 75%, var(--tl) 0) 0 0/2px 2px, var(--dk); }

/* middle */
.middle { display: flex; min-height: 0; }
.leftcol { width: 1660px; display: flex; flex-direction: column; }
.canvas { position: relative; height: 939px; background: var(--bg); overflow: hidden; border-left: 1px solid var(--rd); }
.canvas::before { content: ""; position: absolute; left: 0; right: 0; top: 0; border-top: 1px dotted var(--tl); z-index: 3; }
.canvas::after { content: ""; position: absolute; left: 0; right: 0; bottom: 0; border-bottom: 1px dotted var(--tl); z-index: 3; }
.links { position: absolute; left: -1px; top: 0; width: 1660px; height: 939px; fill: none; stroke: var(--dk); stroke-width: 2.500; }
.cursor { position: absolute; left: 963px; top: 640px; width: 14px; height: 20px; fill: var(--wh); stroke: var(--dk); stroke-width: 1.200; }

/* mind map nodes */
.n { position: absolute; height: 42px; display: flex; align-items: center; padding-left: 5px; border-radius: 6px; white-space: nowrap; overflow: hidden;
  font-family: Inter, "Noto Sans CJK SC", sans-serif; font-weight: 700; font-size: 22px; letter-spacing: -.2px; color: var(--wh); }
.cj { font-size: 22.800px; letter-spacing: 0; padding-bottom: 4px; }
.big { font-size: 22.800px; letter-spacing: 0; }
.ip { letter-spacing: .3px; }
.ip2 { letter-spacing: .6px; }
.red { background-color: var(--rd); }
.dark { background-color: var(--dk); }
.teal { background-color: var(--tl); }
.sp { background-image: conic-gradient(at 1px 1px, transparent 75%, #5ba6a8 0), conic-gradient(at 1px 1px, transparent 75%, #5ba6a8 0); background-size: 6px 6px, 6px 6px; background-position: 0 0, 3px 3px; }
.dn { background-image: conic-gradient(at 1px 1px, transparent 75%, #5ba6a8 0); background-size: 2px 2px; }
.td { background-image: conic-gradient(at 1px 1px, transparent 75%, #232d35 0); background-size: 2px 2px; }
.rd { background-image: conic-gradient(at 1px 1px, transparent 75%, #232d35 0); background-size: 2px 2px; }
.ctr { justify-content: center; padding-left: 0; }
.rt-text { justify-content: flex-end; padding-left: 0; padding-right: 5px; }
.multi { line-height: 29.500px; }
.badge { flex: none; width: 26px; height: 26px; border-radius: 50%; border: 2px solid var(--wh); display: flex; align-items: center; justify-content: center; margin-right: 7px; }
.badge svg { width: 20px; height: 20px; fill: var(--wh); }
.b-teal { background: var(--tl); }
.b-red { background: var(--rd); }
.a8 .badge, .a10 .badge { margin-right: 9px; }

.a1 { left: 123px; top: -18px; width: 29px; padding-left: 8px; }
.a2 { left: 175px; top: -18px; width: 205px; }
.a3 { left: 403px; top: -18px; width: 525px; }
.a4 { left: -1px; top: 31px; width: 100px; }
.a5 { left: 123px; top: 31px; width: 27px; }
.a6 { left: 174px; top: 31px; width: 204px; }
.a7 { left: 123px; top: 80px; width: 29px; }
.a8 { left: 175px; top: 80px; width: 205px; padding-left: 3px; }
.a9 { left: -1px; top: 161px; width: 100px; }
.a10 { left: 123px; top: 129px; width: 204px; padding-left: 3px; }
.a11 { left: 351px; top: 129px; width: 249px; }
.a12 { left: 123px; top: 193px; width: 204px; padding-left: 3px; }
.a13 { left: 351px; top: 193px; width: 157px; }
.a14 { left: 532px; top: 178px; width: 715px; height: 72px; padding-left: 3px; outline: 2px solid var(--tl); outline-offset: 1px; border-radius: 4px; overflow: visible; }
.b1 { left: -1px; top: 388px; width: 234px; font-size: 22.500px; }
.b2 { left: 258px; top: 388px; width: 192px; }
.b3 { left: 474px; top: 388px; width: 176px; }
.b4 { left: 674px; top: 291px; width: 302px; }
.b5 { left: 674px; top: 485px; width: 306px; }
.b6 { left: 999px; top: 255px; width: 139px; }
.b7 { left: 999px; top: 328px; width: 130px; }
.b8 { left: 1152px; top: 328px; width: 88px; padding-left: 4px; }
.b9 { left: 1263px; top: 328px; width: 123px; }
.b10 { left: 1409px; top: 303px; width: 26px; }
.b11 { left: 1409px; top: 352px; width: 52px; }
.b12 { left: 1003px; top: 425px; width: 207px; }
.b13 { left: 1235px; top: 401px; width: 32px; }
.b14 { left: 1291px; top: 401px; width: 57px; }
.b15 { left: 1371px; top: 401px; width: 164px; }
.b16 { left: 1559px; top: 401px; width: 240px; }
.b17 { left: 1235px; top: 450px; width: 32px; }
.b18 { left: 1291px; top: 450px; width: 57px; }
.b19 { left: 1371px; top: 450px; width: 164px; }
.b20 { left: 1559px; top: 450px; width: 260px; }
.b21 { left: 1003px; top: 545px; width: 207px; }
.b22 { left: 1235px; top: 513px; width: 165px; }
.b23 { left: 1235px; top: 577px; width: 165px; }
.b24 { left: 1425px; top: 498px; width: 340px; height: 72px; }
.b25 { left: -1px; top: 626px; width: 234px; font-size: 22.500px; }

/* status */
.status { position: relative; flex: 1; display: flex; justify-content: flex-end; align-items: center; padding: 10px 0 0 0; font-size: 12px; color: var(--wh); }
.thumb { position: absolute; left: 664px; top: 1px; width: 476px; height: 8px; background: repeating-conic-gradient(var(--tl) 0 25%, var(--dk) 0 50%) 0 0/2px 2px; opacity: .55; }
.count { margin-right: 16px; }
.st-ic { fill: none; stroke: var(--wh); stroke-width: 1.400; }
.book { width: 18px; height: 16px; margin-right: 12px; }
.zoombtn { font-size: 16px; line-height: 1; width: 22px; text-align: center; }
.pct { margin: 0 8px 0 10px; font-size: 12px; }
.updn { width: 10px; height: 16px; }

/* side panel */
.side { position: relative; width: 260px; overflow: hidden; padding: 1px 0 0 25px; background: var(--dk); }
.tabs { display: flex; margin-left: -15px; }
.tab { width: 125px; height: 33px; display: flex; align-items: center; justify-content: center; font-size: 13px; color: var(--tl); }
.tab.on { background: var(--tl); color: var(--wh); }
.legend { margin: 21px 0 15px; width: 212px; height: 22px; display: flex; align-items: center; justify-content: center; font-size: 12px; color: var(--wh);
  background: conic-gradient(at 1px 1px, transparent 75%, #4d8b8f 0) 0 0/4px 3px; }
.sec { margin-bottom: 28.400px; }
.sec h3 { margin: 0 0 2px; font-size: 12px; line-height: 16px; font-weight: 700; color: var(--wh); }
.grid { display: grid; grid-template-columns: repeat(7, 22px); column-gap: 8px; row-gap: 14.500px; }
.mk { width: 22px; height: 22px; border-radius: 50%; display: flex; align-items: center; justify-content: center; color: var(--wh); }
.mk svg { width: 22px; height: 22px; fill: var(--wh); }
.m-r { background: var(--rd); }
.m-t { background: var(--tl); }
.m-rd { background: conic-gradient(at 1px 1px, transparent 75%, #f4d8d2 0) 0 0/2px 2px, var(--rd); }
.m-td { background: conic-gradient(at 1px 1px, transparent 75%, #232d35 0) 0 0/4px 4px, var(--tl); }
.m-x { background: repeating-conic-gradient(#eef4fa 0 25%, #232d35 0 50%) 0 0/2px 2px; border: 1px solid var(--tl); }
.m-c { background: repeating-conic-gradient(var(--rd) 0 25%, var(--tl) 0 50%) 0 0/2px 2px; }
.num { font-size: 16px; font-weight: 800; }
.glyph { font-size: 17px; font-weight: 800; }
.fs { fill: none; stroke: #232d35; stroke-width: 1.400; }
.ff { fill: #232d35; }
.fw { fill: #eef4fa; }
.ft { fill: #5ba6a8; }
.scroll-r { position: absolute; right: 0; top: 47px; width: 7px; height: 733px; background: repeating-conic-gradient(var(--tl) 0 25%, var(--dk) 0 50%) 0 0/2px 2px; opacity: .55; }

/* taskbar */
.taskbar { position: relative; display: flex; align-items: flex-start; background: var(--dk); }
.w { fill: var(--wh); }
.r { fill: var(--rd); }
.t { fill: var(--tl); }
.d { fill: #232d35; }
.ws { fill: none; stroke: var(--wh); stroke-width: 1.200; }
.ws.th { stroke-width: 2.400; }
.ws.tl { stroke: var(--tl); }
.ws.dk { stroke: var(--tl); }
.ws.thin { stroke-width: 1.100; }
.rd-f { fill: #ee9080; }
.dot-d { fill: #3e7476; }
.ts-t { fill: none; stroke: var(--tl); stroke-width: 2.200; }
.ts-r { fill: none; stroke: var(--rd); stroke-width: 2.200; }
.jt { fill: var(--wh); font-size: 9px; font-weight: 700; text-anchor: middle; font-family: Inter, sans-serif; }
.st { fill: var(--wh); font-size: 12px; font-weight: 800; text-anchor: middle; font-family: Inter, sans-serif; }
.tb { display: flex; }
.g1 .ti { width: 45px; }
.g2 { margin-left: 2px; }
.ti { position: relative; width: 46.500px; height: 38px; display: flex; justify-content: center; align-items: flex-start; padding-top: 9px; }
.ti svg { width: 22px; height: 22px; }
.act::after { content: ""; position: absolute; left: 4px; right: 4px; bottom: 0; height: 2px; background: var(--tl); }
.hot { background: repeating-conic-gradient(var(--rd) 0 25%, var(--dk) 0 50%) 0 0/2px 2px; }
.hot::after { content: ""; position: absolute; left: 0; right: 0; bottom: 0; height: 2px; background: var(--rd); }
.tray { position: absolute; left: 1560px; top: 0; right: 0; height: 38px; display: flex; align-items: flex-start; padding-top: 11px; gap: 7px; }
.ty { width: 16px; height: 16px; flex: none; }
.up { margin-right: 22px; margin-left: 2px; }
.tray-t { font-size: 13px; color: var(--tl); line-height: 16px; }
.clock { display: flex; flex-direction: column; align-items: center; font-size: 12px; line-height: 17px; margin: -9px 0 0 14px; width: 66px; }
.notif { position: relative; margin-left: 8px; }
.notif svg { width: 16px; height: 20px; display: block; margin-top: -2px; }
.notif b { position: absolute; right: -4px; bottom: -4px; font-size: 10px; }

/* overlays */
.red-top { position: absolute; left: 932px; top: 0; width: 56px; height: 4px; background: var(--rd); }
.red-tl { position: absolute; left: 0; top: 0; width: 18px; height: 21px; border-top: 2px solid var(--rd); border-left: 1px solid var(--rd); }
.red-tr { position: absolute; right: 0; top: 0; width: 18px; height: 21px; border-top: 2px solid var(--rd); border-right: 1px solid var(--rd); }
.red-ll { position: absolute; left: 0; top: 1026px; width: 2px; height: 16px; background: var(--rd); }
.scroll-l { position: absolute; left: 1661px; top: 707px; width: 7px; height: 161px; background: repeating-conic-gradient(var(--tl) 0 25%, var(--dk) 0 50%) 0 0/2px 2px; opacity: .55; }
.ime { position: absolute; left: 1793px; top: 977px; width: 106px; height: 22px; display: flex; align-items: center; background: var(--dk); color: var(--tl); }
.ime-zh { font-size: 23px; font-weight: 300; width: 26px; }
.ime-p { font-size: 13px; margin-left: 6px; }
.ime-b { font-size: 17px; margin-left: 10px; }
.ime svg { width: 20px; height: 16px; margin-left: 4px; fill: var(--wh); }
.rec { position: absolute; left: 1744px; top: 1012px; width: 170px; height: 27px; display: flex; align-items: center; padding-left: 13px; background: var(--bg); color: var(--dk); font-size: 12px; border-bottom: 1px dotted var(--tl); }
.rec-dot { width: 8px; height: 8px; border-radius: 50%; background: var(--rd); margin-right: 10px; }
.rec-time { margin-right: 21px; }
.rec svg { width: 13px; height: 13px; fill: none; stroke: var(--rd); stroke-width: 1.500; margin-right: 3px; }
```
